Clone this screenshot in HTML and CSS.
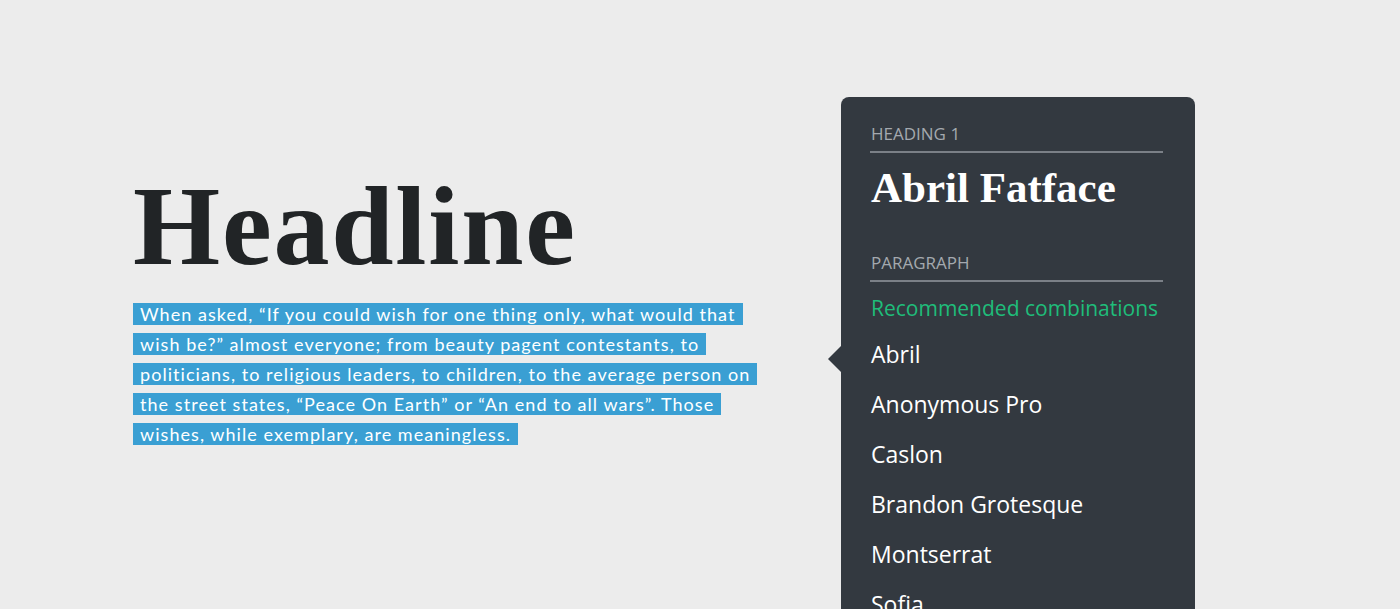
FILE: index.html
```html
<!DOCTYPE html>
<html lang="en">
<head>
<meta charset="utf-8">
<title>Font picker</title>
<link rel="stylesheet" href="styles.css">
</head>
<body>
<div class="page">
  <div class="preview">
    <h1 class="headline">Headline</h1>
    <p class="para"><span class="hl">When asked, “If you could wish for one thing only, what would that</span><br><span class="hl">wish be?” almost everyone; from beauty pagent contestants, to</span><br><span class="hl">politicians, to religious leaders, to children, to the average person on</span><br><span class="hl">the street states, “Peace On Earth” or “An end to all wars”. Those</span><br><span class="hl">wishes, while exemplary, are meaningless.</span></p>
  </div>
  <div class="panel">
    <span class="arrow"></span>
    <div class="label">Heading 1</div>
    <div class="current">Abril Fatface</div>
    <div class="label label-para">Paragraph</div>
    <div class="recommend">Recommended combinations</div>
    <ul class="fonts">
      <li>Abril</li>
      <li>Anonymous Pro</li>
      <li>Caslon</li>
      <li>Brandon Grotesque</li>
      <li>Montserrat</li>
      <li>Sofia</li>
    </ul>
  </div>
</div>
</body>
</html>
```
FILE: styles.css
```css
html, body {
  margin: 0;
  padding: 0;
  height: 609px;
  overflow: hidden;
  background: #ececec;
}
.page {
  display: grid;
  grid-template-columns: 708px 354px;
  padding-left: 133px;
  padding-top: 97px;
  height: 609px;
  box-sizing: border-box;
}
.preview {
  padding-top: 73px;
}
.headline {
  margin: 0;
  font-family: "Liberation Serif", serif;
  font-weight: 700;
  font-size: 112px;
  line-height: 112px;
  color: #212426;
  letter-spacing: 1.8px;
}
.para {
  margin: 17px 0 0;
  font-family: Lato, "Liberation Sans", sans-serif;
  font-size: 18px;
  line-height: 30px;
  letter-spacing: 1.05px;
  color: #ffffff;
}
.hl {
  background: #3a9fd3;
  padding: 0 7px;
  -webkit-box-decoration-break: clone;
  box-decoration-break: clone;
}
.panel {
  position: relative;
  background: #333940;
  border-radius: 8px 8px 0 0;
  padding: 27px 32px 0 29px;
  height: 620px;
  box-sizing: border-box;
  font-family: "Open Sans", "Noto Sans", sans-serif;
}
.arrow {
  position: absolute;
  left: -13px;
  top: 249px;
  width: 0;
  height: 0;
  border-top: 13px solid transparent;
  border-bottom: 13px solid transparent;
  border-right: 13px solid #333940;
}
.label {
  font-size: 17px;
  line-height: 20px;
  text-transform: uppercase;
  color: #a4a9af;
  padding-bottom: 7px;
  border-bottom: 2px solid #7b8087;
  padding-left: 1px;
}
.current {
  margin-top: 9px;
  font-family: "Liberation Serif", serif;
  font-weight: 700;
  font-size: 43px;
  line-height: 52px;
  color: #ffffff;
  padding-left: 1px;
}
.label-para {
  margin-top: 39px;
}
.recommend {
  margin-top: 12px;
  font-size: 21px;
  line-height: 28px;
  color: #1fbd7a;
  padding-left: 1px;
}
.fonts {
  list-style: none;
  margin: 7px 0 0;
  padding: 0 0 0 1px;
}
.fonts li {
  font-size: 23px;
  line-height: 50px;
  color: #ffffff;
}
```
